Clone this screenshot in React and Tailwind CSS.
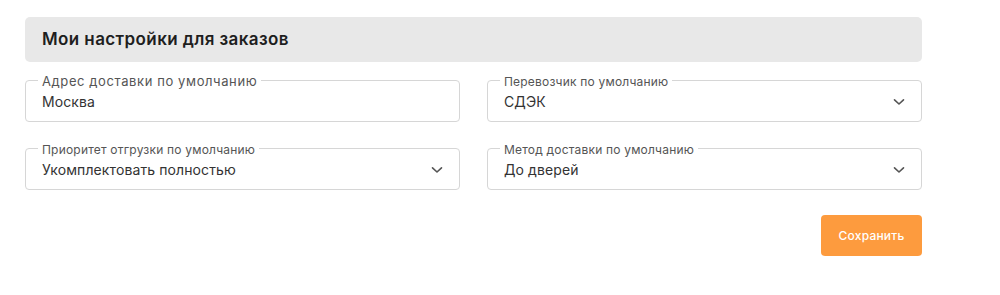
import React from "react";

const Chevron = () => (
  <svg width="12" height="8" viewBox="0 0 12 8" fill="none" className="shrink-0">
    <path d="M1.5 1.8 L6 6 L10.5 1.8" stroke="#555" strokeWidth="1.6" strokeLinecap="round" strokeLinejoin="round" />
  </svg>
);

const Field = ({ label, value, select, big }) => (
  <fieldset className="border border-[#d6d6d6] rounded-[4px] h-[48px] px-[16px] pb-[10px] min-w-0 flex flex-col -mt-[6px]">
    <legend
      className={
        big
          ? "px-[4px] -ml-[4px] text-[13px] leading-[13px] tracking-[0.6px] text-[#555]"
          : "px-[4px] -ml-[4px] text-[12px] leading-[13px] tracking-[0.2px] text-[#555]"
      }
    >
      <span className="relative top-[1px]">{label}</span>
    </legend>
    <div className="flex items-center justify-between mt-[6px]">
      <span className="text-[14px] leading-[18px] text-[#333] tracking-[0.1px]">{value}</span>
      {select && <Chevron />}
    </div>
  </fieldset>
);

export default function App() {
  return (
    <div className="bg-white w-[1000px] h-[295px] pt-[17px] pl-[25px]" style={{ fontFamily: "Inter, 'Noto Sans', sans-serif" }}>
      <div className="w-[897px]">
        <div className="h-[45px] rounded-[5px] bg-[#e8e8e8] flex items-center px-[17px]">
          <h2 className="text-[17px] font-semibold tracking-[0.4px] text-[#1e1e1e]">Мои настройки для заказов</h2>
        </div>
        <div className="grid grid-cols-2 gap-x-[27px] gap-y-[26px] mt-[18px]">
          <Field label="Адрес доставки по умолчанию" value="Москва" big />
          <Field label="Перевозчик по умолчанию" value="СДЭК" select />
          <Field label="Приоритет отгрузки по умолчанию" value="Укомплектовать полностью" select />
          <Field label="Метод доставки по умолчанию" value="До дверей" select />
        </div>
        <div className="flex justify-end mt-[25px]">
          <button className="w-[101px] h-[41px] rounded-[4px] bg-[#fd9b3e] text-white text-[12px] font-medium tracking-[0.2px]">Сохранить</button>
        </div>
      </div>
    </div>
  );
}
